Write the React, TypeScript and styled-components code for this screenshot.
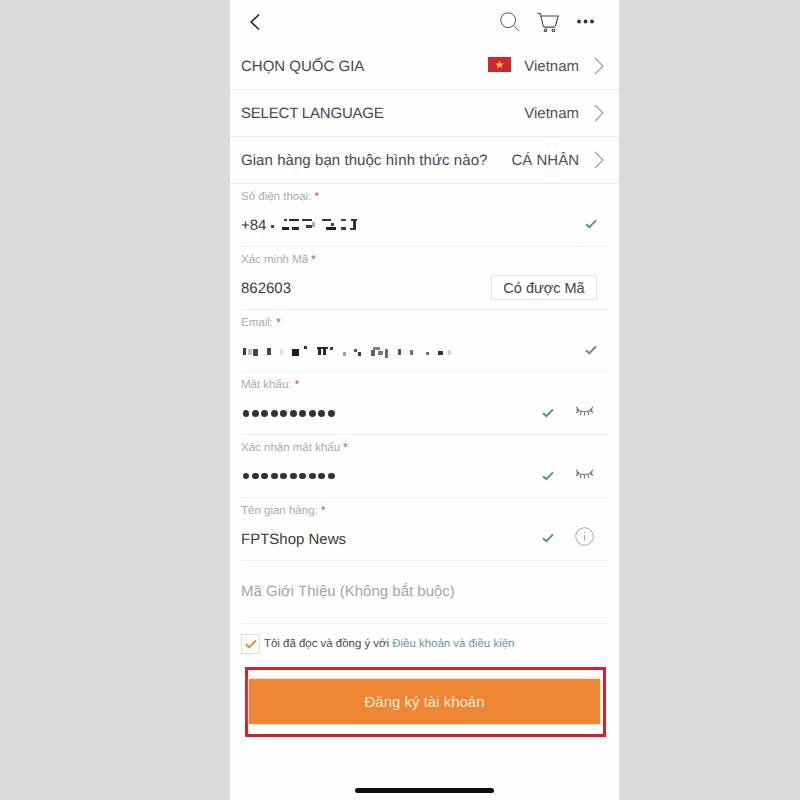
import React from 'react';
import styled, { createGlobalStyle } from 'styled-components';

const GlobalStyle = createGlobalStyle`
  html, body {
    margin: 0;
    padding: 0;
    background: #d9dadc;
    font-family: "Liberation Sans", Arial, sans-serif;
    text-rendering: geometricPrecision;
  }
`;

const Page = styled.div`
  width: 800px;
  height: 800px;
  padding-left: 230px;
  box-sizing: border-box;
`;

const Phone = styled.main`
  width: 389px;
  height: 800px;
  background: #fefefe;
  display: flex;
  flex-direction: column;
  overflow: hidden;
`;

const TopBar = styled.header`
  height: 43px;
  display: flex;
  align-items: center;
  justify-content: space-between;
  padding: 0 25px 0 19px;
  box-sizing: border-box;
`;

const TopActions = styled.div`
  display: flex;
  align-items: center;
  gap: 14px;
`;

const CartIcon = styled.svg`
  margin-left: 3px;
`;

const MoreIcon = styled.svg`
  margin-left: 4px;
`;

const SelectRow = styled.div`
  height: 47px;
  display: flex;
  align-items: center;
  padding: 0 15px 0 11px;
  box-sizing: border-box;
  border-bottom: 1px solid #ececec;
  font-size: 15px;
  color: #474747;
`;

const SelectLabel = styled.span<{ $spacing?: number }>`
  flex: 1;
  letter-spacing: ${({ $spacing }) => $spacing ?? 0}px;
`;

const SelectValue = styled.span`
  color: #4f4f4f;
  margin-right: 15px;
`;

const Flag = styled.svg`
  width: 23px;
  height: 15px;
  margin-right: 13px;
  margin-top: -3px;
`;

const Form = styled.section`
  display: flex;
  flex-direction: column;
  padding: 0 11px;
`;

const Field = styled.div`
  height: 62.8px;
  box-sizing: border-box;
  border-bottom: 1px solid #f0f0f0;
  display: flex;
  flex-direction: column;
`;

const FieldLabel = styled.div`
  font-size: 11.5px;
  line-height: 14px;
  margin-top: 6px;
  color: #ababab;
`;

const Required = styled.span`
  color: #c9482f;
`;

const FieldBody = styled.div<{ $inset?: number }>`
  flex: 1;
  display: flex;
  align-items: center;
  margin-top: -1px;
  padding-right: ${({ $inset }) => $inset ?? 11}px;
`;

const FieldValue = styled.span`
  flex: 1;
  display: flex;
  align-items: center;
  gap: 5px;
  padding-top: 3px;
  font-size: 15px;
  color: #3b3b3b;
`;

const Dots = styled.span`
  display: flex;
  gap: 2.7px;
  margin: -2px 0 0 1.5px;
`;

const Dot = styled.i`
  width: 6.8px;
  height: 6.8px;
  border-radius: 50%;
  background: #333;
`;

const TrailIcon = styled.span<{ $gap?: number }>`
  display: flex;
  margin-left: ${({ $gap }) => $gap ?? 0}px;
`;

const EyeIcon = styled.svg`
  margin-top: -4px;
`;

const InfoIcon = styled.svg`
  margin-top: -4px;
`;

const Smudge = styled.svg`
  filter: blur(0.5px);
`;

const CodeButton = styled.button`
  width: 106px;
  height: 25px;
  margin-top: 1px;
  padding: 0;
  background: #fff;
  border: 1px solid #e4e4e4;
  font: inherit;
  font-size: 14.5px;
  color: #444;
`;

const Placeholder = styled.div`
  height: 62.8px;
  box-sizing: border-box;
  border-bottom: 1px solid #f0f0f0;
  display: flex;
  align-items: center;
  font-size: 15px;
  color: #a5a5a5;
`;

const Terms = styled.label`
  display: flex;
  align-items: center;
  gap: 4px;
  margin-top: 10px;
  font-size: 11.45px;
  color: #4a4a4a;
`;

const CheckBox = styled.span`
  width: 19px;
  height: 20px;
  box-sizing: border-box;
  border: 1px solid #ecdcc6;
  display: flex;
  align-items: center;
  justify-content: center;
`;

const TermsLink = styled.a`
  color: #5f9aa8;
`;

const Highlight = styled.div`
  margin: 13px 0 0 15px;
  width: 361px;
  height: 70px;
  box-sizing: border-box;
  border: 3px solid #d71f2c;
  padding: 9px 3px 10px 1px;
`;

const SubmitButton = styled.button`
  width: 100%;
  height: 100%;
  padding: 0;
  border: 0;
  background: #ee8533;
  box-shadow: 0 0 3px #f3c797;
  color: #fbe9d8;
  font: inherit;
  font-size: 15px;
`;

const HomeBar = styled.div`
  width: 139px;
  height: 5px;
  margin: auto auto 7px;
  background: #0c0c0c;
  border-radius: 3px;
`;

const Chevron = () => (
  <svg width="10" height="18" viewBox="0 0 10 18" fill="none" stroke="#9a9a9a" strokeWidth="1.1">
    <path d="M1 1l8 8-8 8" />
  </svg>
);

const Check = () => (
  <svg width="12" height="10" viewBox="0 0 12 10" fill="none" stroke="#4b8ea3" strokeWidth="1.9">
    <path d="M1 5.2l3.4 3L11 1.4" />
  </svg>
);

const Eye = () => (
  <EyeIcon width="19" height="10" viewBox="0 0 19 10" fill="none" stroke="#777" strokeWidth="1.15">
    <path d="M1.5 3.8C6 6 13 6 17.5 3.8M1 .8l3 3.6M18 .8l-3 3.6M1 6.8l2.6-2M6 5.4L5.4 9M9.5 5.8v3.7M13 5.4l.6 3.6M18 6.8l-2.6-2" />
  </EyeIcon>
);

const Info = () => (
  <InfoIcon width="19" height="19" viewBox="0 0 19 19" fill="none" stroke="#9d9d9d" strokeWidth="0.9">
    <circle cx="9.5" cy="9.5" r="8.8" />
    <path d="M9.5 8v5.5M9.5 5v1.2" />
  </InfoIcon>
);

// blurred-out pixel strips from the reference (x, y, w, h, shade)
const phoneBlocks: number[][] = [
  [0, 6, 3, 3, 70], [13, 0, 3, 2, 60], [18, 0, 10, 2, 40], [31, 0, 10, 2, 50], [41, 3, 3, 5, 170], [11, 8, 7, 3, 30], [21, 8, 7, 3, 40], [35, 6, 6, 3, 60],
  [51, 0, 9, 2, 50], [60, 4, 3, 3, 70], [55, 8, 10, 3, 30], [70, 0, 5, 2, 70], [70, 8, 5, 3, 60], [80, 0, 6, 2, 50], [82, 2, 3, 9, 50], [79, 9, 4, 2, 60],
];

const emailBlocks: number[][] = [
  [2, 4, 3, 7, 60], [7, 5, 4, 6, 190], [12, 5, 5, 7, 70], [26, 4, 4, 7, 70], [39, 5, 3, 6, 220], [51, 5, 7, 7, 30], [63, 2, 3, 3, 50], [76, 3, 11, 2, 40], [77, 5, 3, 6, 40], [82, 5, 3, 6, 40], [89, 3, 3, 3, 60],
  [102, 8, 3, 4, 160], [113, 5, 3, 3, 90], [117, 8, 3, 4, 60], [132, 3, 7, 3, 130], [130, 6, 4, 6, 100], [137, 7, 5, 4, 120], [144, 5, 3, 9, 110], [157, 5, 3, 6, 90], [169, 6, 3, 5, 110], [185, 8, 3, 3, 110], [197, 7, 5, 4, 50], [207, 6, 3, 5, 210],
];

const Redacted = ({ blocks, width }: { blocks: number[][]; width: number }) => (
  <Smudge width={width} height="14" viewBox={`0 0 ${width} 14`}>
    {blocks.map(([x, y, w, h, s]) => (
      <rect key={`${x}-${y}`} x={x} y={y} width={w} height={h} fill={`rgb(${s},${s},${s})`} />
    ))}
  </Smudge>
);

const PasswordDots = () => (
  <Dots>
    {Array.from({ length: 10 }).map((_, i) => (
      <Dot key={i} />
    ))}
  </Dots>
);

export default function App() {
  return (
    <Page>
      <GlobalStyle />
      <Phone>
        <TopBar>
          <svg width="12" height="18" viewBox="0 0 12 18" fill="none" stroke="#2c2c2c" strokeWidth="1.7">
            <path d="M10 1.5L2.2 9l7.8 7.5" />
          </svg>
          <TopActions>
            <svg width="20" height="20" viewBox="0 0 20 20" fill="none" stroke="#555" strokeWidth="1">
              <circle cx="8.2" cy="8.2" r="7.4" />
              <path d="M13.6 13.4l5.8 5.8" />
            </svg>
            <CartIcon width="22" height="20" viewBox="0 0 22 20" fill="none" stroke="#444" strokeWidth="1.1">
              <path d="M0.5 1L3.5 2L6 13.5q.3 1.6 2 1.6h8.5q1.7 0 2-1.6L21.3 4H4" />
              <circle cx="8.5" cy="18.3" r="1.3" />
              <circle cx="16.5" cy="18.3" r="1.3" />
            </CartIcon>
            <MoreIcon width="17" height="5" viewBox="0 0 17 5" fill="#333">
              <circle cx="2" cy="2.5" r="1.9" />
              <circle cx="8.5" cy="2.5" r="1.9" />
              <circle cx="15" cy="2.5" r="1.9" />
            </MoreIcon>
          </TopActions>
        </TopBar>

        <SelectRow>
          <SelectLabel>CHỌN QUỐC GIA</SelectLabel>
          <Flag viewBox="0 0 23 15">
            <rect width="23" height="15" fill="#c8282e" />
            <path d="M11.5 3.2l1.1 3.2h3.3l-2.7 2 1 3.2-2.7-2-2.7 2 1-3.2-2.7-2h3.3z" fill="#f4c63d" />
          </Flag>
          <SelectValue>Vietnam</SelectValue>
          <Chevron />
        </SelectRow>
        <SelectRow>
          <SelectLabel $spacing={-0.2}>SELECT LANGUAGE</SelectLabel>
          <SelectValue>Vietnam</SelectValue>
          <Chevron />
        </SelectRow>
        <SelectRow>
          <SelectLabel $spacing={0.06}>Gian hàng bạn thuộc hình thức nào?</SelectLabel>
          <SelectValue>CÁ NHÂN</SelectValue>
          <Chevron />
        </SelectRow>

        <Form>
          <Field>
            <FieldLabel>Số điện thoại: <Required>*</Required></FieldLabel>
            <FieldBody>
              <FieldValue>+84 <Redacted blocks={phoneBlocks} width={86} /></FieldValue>
              <TrailIcon><Check /></TrailIcon>
            </FieldBody>
          </Field>
          <Field>
            <FieldLabel>Xác minh Mã <Required>*</Required></FieldLabel>
            <FieldBody>
              <FieldValue>862603</FieldValue>
              <CodeButton>Có được Mã</CodeButton>
            </FieldBody>
          </Field>
          <Field>
            <FieldLabel>Email: <Required>*</Required></FieldLabel>
            <FieldBody>
              <FieldValue><Redacted blocks={emailBlocks} width={212} /></FieldValue>
              <TrailIcon><Check /></TrailIcon>
            </FieldBody>
          </Field>
          <Field>
            <FieldLabel>Mật khẩu: <Required>*</Required></FieldLabel>
            <FieldBody $inset={14}>
              <FieldValue><PasswordDots /></FieldValue>
              <TrailIcon><Check /></TrailIcon>
              <TrailIcon $gap={21}><Eye /></TrailIcon>
            </FieldBody>
          </Field>
          <Field>
            <FieldLabel>Xác nhận mật khẩu <Required>*</Required></FieldLabel>
            <FieldBody $inset={14}>
              <FieldValue><PasswordDots /></FieldValue>
              <TrailIcon><Check /></TrailIcon>
              <TrailIcon $gap={21}><Eye /></TrailIcon>
            </FieldBody>
          </Field>
          <Field>
            <FieldLabel>Tên gian hàng: <Required>*</Required></FieldLabel>
            <FieldBody $inset={14}>
              <FieldValue>FPTShop News</FieldValue>
              <TrailIcon><Check /></TrailIcon>
              <TrailIcon $gap={21}><Info /></TrailIcon>
            </FieldBody>
          </Field>
          <Placeholder>Mã Giới Thiệu (Không bắt buộc)</Placeholder>
          <Terms>
            <CheckBox>
              <svg width="12" height="10" viewBox="0 0 12 10" fill="none" stroke="#ee8533" strokeWidth="1.9">
                <path d="M1 5.2l3.4 3L11 1.4" />
              </svg>
            </CheckBox>
            <span>Tôi đã đọc và đồng ý với <TermsLink>Điều khoản và điều kiện</TermsLink></span>
          </Terms>
        </Form>

        <Highlight>
          <SubmitButton>Đăng ký tài khoản</SubmitButton>
        </Highlight>
        <HomeBar />
      </Phone>
    </Page>
  );
}
